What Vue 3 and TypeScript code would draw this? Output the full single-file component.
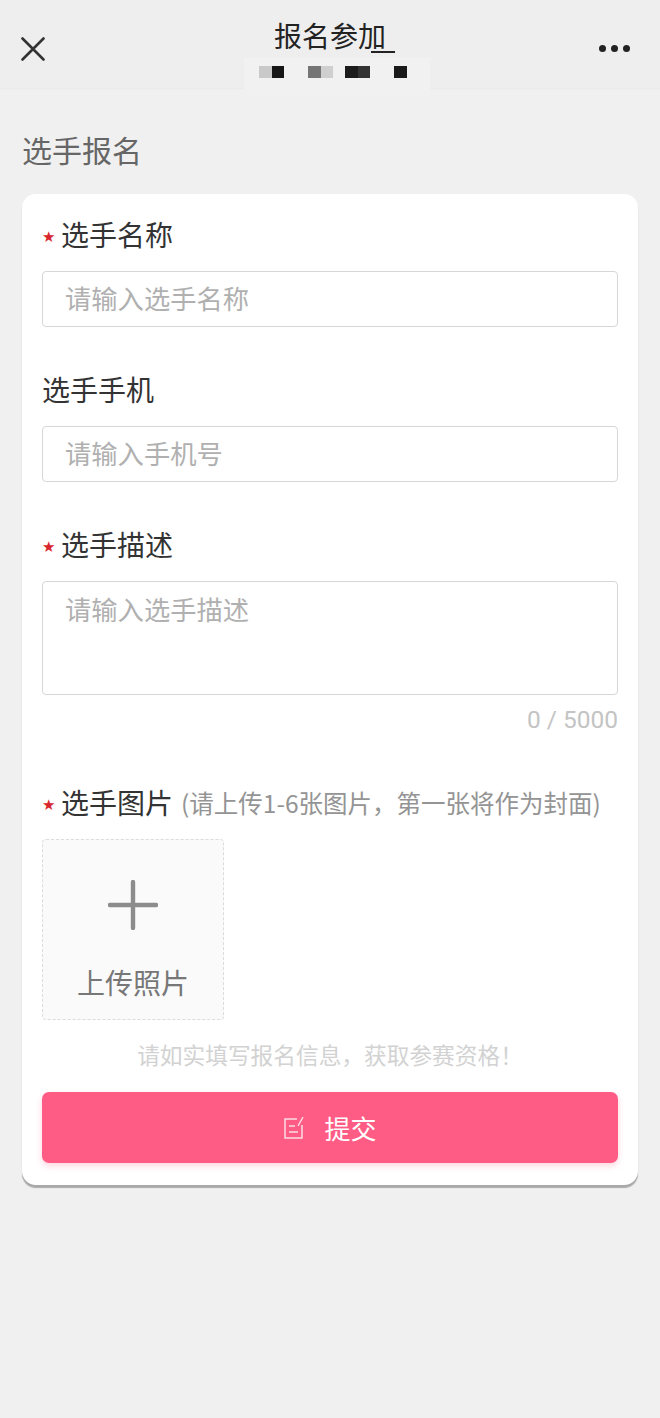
<script setup lang="ts">
const mosaic: string[][] = [
  ['#c9c9c9', '#161616'],
  ['#757575', '#cfcfcf'],
  ['#1c1c1c', '#333333'],
  ['#1a1a1a'],
]
</script>

<template>
  <div class="page">
    <header class="nav">
      <button class="nav-btn close" aria-label="关闭">
        <svg width="24" height="24" viewBox="0 0 24 24"><path d="M1.5 1.5 L22.5 22.5 M22.5 1.5 L1.5 22.5" stroke="#333" stroke-width="2.6" fill="none" stroke-linecap="round" /></svg>
      </button>
      <div class="nav-center">
        <div class="nav-title">报名参加<span class="cursor"></span></div>
        <div class="mosaic">
          <div v-for="(group, i) in mosaic" :key="i" class="mosaic-group">
            <i v-for="(color, j) in group" :key="j" :style="{ background: color }"></i>
          </div>
        </div>
      </div>
      <div class="nav-btn dots" aria-label="更多"><i></i><i></i><i></i></div>
    </header>

    <main class="content">
      <h1 class="section-title">选手报名</h1>
      <form class="card" @submit.prevent>
        <div class="field">
          <label class="label"><span class="star">★</span>选手名称</label>
          <input class="control" placeholder="请输入选手名称" />
        </div>
        <div class="field">
          <label class="label">选手手机</label>
          <input class="control" placeholder="请输入手机号" />
        </div>
        <div class="field last">
          <label class="label"><span class="star">★</span>选手描述</label>
          <textarea class="control area" placeholder="请输入选手描述"></textarea>
          <div class="counter">0 / 5000</div>
        </div>
        <div class="field photos">
          <label class="label"><span class="star">★</span>选手图片<span class="note">(请上传1-6张图片，第一张将作为封面)</span></label>
          <div class="upload">
            <svg width="50" height="50" viewBox="0 0 50 50"><path d="M25 2 V48 M2 25 H48" stroke="#8c8c8c" stroke-width="4.4" stroke-linecap="round" fill="none" /></svg>
            <span>上传照片</span>
          </div>
        </div>
        <p class="hint">请如实填写报名信息，获取参赛资格！</p>
        <button class="submit" type="submit">
          <svg width="22" height="24" viewBox="0 0 22 24" fill="none" stroke="#fbdbe4" stroke-width="1.5">
            <path d="M14 3 H2 V22 H19 V9" />
            <path d="M15 10 L20 1" />
            <path d="M6 10 H12 M6 16 H15" />
          </svg>
          <span>提交</span>
        </button>
      </form>
    </main>
  </div>
</template>

<style scoped>
.page {
  width: 660px;
  height: 1418px;
  background: #f0f0f0;
  font-family: "Noto Sans CJK SC", Roboto, sans-serif;
  overflow: hidden;
}
.nav {
  height: 89px;
  box-sizing: border-box;
  display: grid;
  grid-template-columns: 1fr auto 1fr;
  align-items: start;
  background: #eeeeee;
  border-bottom: 1px solid #ebebeb;
}
.nav-btn {
  padding: 0;
  border: 0;
  background: none;
  margin-top: 37px;
}
.close {
  justify-self: start;
  margin-left: 21px;
  width: 24px;
  height: 24px;
}
.dots {
  justify-self: end;
  display: flex;
  gap: 5px;
  margin: 45px 30px 0 0;
}
.dots i {
  width: 7px;
  height: 7px;
  border-radius: 50%;
  background: #222;
}
.nav-center {
  display: flex;
  flex-direction: column;
  align-items: center;
  margin-left: 14px;
  background: linear-gradient(#eeeeee 58px, #f1f1f1 58px);
  width: 186px;
  height: 96px;
}
.nav-title {
  position: relative;
  margin-top: 15px;
  margin-left: -14px;
  font-size: 28px;
  line-height: 40px;
  color: #222;
  white-space: nowrap;
}
.cursor {
  position: absolute;
  right: -9px;
  top: 36px;
  width: 24px;
  height: 2px;
  background: #222;
}
.mosaic {
  display: flex;
  gap: 24px;
  margin-top: 11px;
  margin-left: -8px;
}
.mosaic-group {
  display: flex;
}
.mosaic-group:nth-child(3) {
  margin-left: -12px;
}
.mosaic i {
  display: block;
  width: 12.5px;
  height: 12px;
}
.content {
  padding: 0 22px;
}
.section-title {
  margin: 0;
  padding-top: 39px;
  font-size: 30px;
  line-height: 42px;
  font-weight: 400;
  color: #666;
}
.card {
  box-sizing: border-box;
  margin-top: 24px;
  height: 991px;
  padding: 18px 20px 0;
  background: #fff;
  border-radius: 14px;
  box-shadow: 0 3px 1px #a9a9a9;
}
.field {
  margin-bottom: 40px;
}
.field.last {
  margin-bottom: 45px;
}
.field.photos {
  margin-bottom: 19px;
}
.label {
  display: flex;
  align-items: center;
  height: 44px;
  font-size: 28px;
  color: #333;
  white-space: nowrap;
}
.star {
  flex: none;
  width: 19px;
  padding: 6px 0 0 0;
  box-sizing: border-box;
  font-family: "DejaVu Sans", sans-serif;
  font-size: 15px;
  line-height: 1;
  color: #d9252e;
}
.note {
  margin-left: 8px;
  font-size: 24.5px;
  color: #949494;
}
.control {
  display: block;
  box-sizing: border-box;
  width: 100%;
  height: 56px;
  margin: 15px 0 0;
  padding: 0 22px 3px;
  border: 1px solid #d6d6d6;
  border-radius: 4px;
  background: #fff;
  outline: none;
  font-family: inherit;
  font-size: 26.3px;
}
.control::placeholder {
  color: #b0b0b0;
  opacity: 1;
}
.area {
  height: 114px;
  padding: 7px 22px;
  resize: none;
  line-height: 40px;
}
.counter {
  margin-top: 10px;
  text-align: right;
  font-family: Roboto, sans-serif;
  font-size: 24.5px;
  line-height: 30px;
  color: #c4c4c4;
}
.upload {
  box-sizing: border-box;
  width: 182px;
  height: 181px;
  margin-top: 15px;
  display: flex;
  flex-direction: column;
  align-items: center;
  padding-top: 40px;
  gap: 32px;
  background: #fafafa;
  border: 1px dashed #dcdcdc;
  border-radius: 4px;
  font-size: 28px;
  line-height: 40px;
  color: #777;
}
.hint {
  margin: 0;
  text-align: center;
  font-size: 22.7px;
  line-height: 32px;
  color: #d2d2d2;
}
.submit {
  width: 100%;
  height: 71px;
  margin-top: 21px;
  display: flex;
  align-items: center;
  justify-content: center;
  gap: 19px;
  border: 0;
  border-radius: 7px;
  background: #ff5c85;
  box-shadow: 0 3px 6px rgba(255, 92, 133, 0.25);
  color: #fff;
  font-family: inherit;
  font-size: 26px;
}
</style>
